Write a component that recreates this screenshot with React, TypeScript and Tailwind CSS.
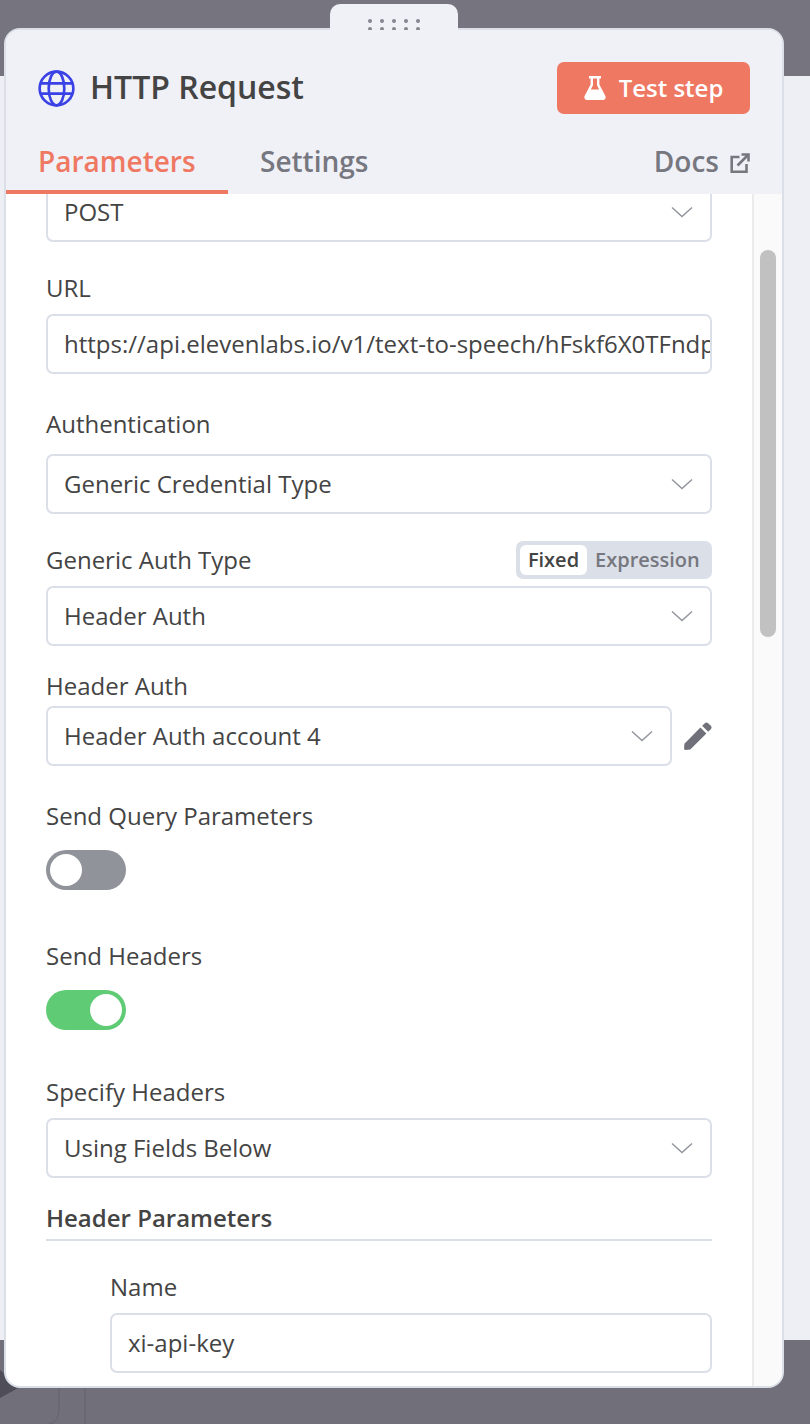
function Chevron() {
    return (
        <svg width="22" height="12" viewBox="0 0 22 12" fill="none" className="shrink-0">
            <path d="M1 1.5L11 10.5L21 1.5" stroke="#909399" strokeWidth="1.4" />
        </svg>
    );
}

function Select({ value, className = '' }: { value: string; className?: string }) {
    return (
        <div className={`flex h-[60px] items-center justify-between rounded-[7px] border-2 border-[#dbdfe7] bg-white pl-[16px] pr-[17px] ${className}`}>
            <span className="text-[24px] leading-none text-[#444444]">{value}</span>
            <Chevron />
        </div>
    );
}

function Label({ children, className = '' }: { children: React.ReactNode; className?: string }) {
    return <div className={`text-[24px] leading-[32px] text-[#444444] ${className}`}>{children}</div>;
}

function Toggle({ on }: { on?: boolean }) {
    return (
        <div className={`flex h-[40px] w-[80px] items-center rounded-full px-[4px] ${on ? 'justify-end bg-[#5fcb75]' : 'justify-start bg-[#909399]'}`}>
            <div className="h-[32px] w-[32px] rounded-full bg-white" />
        </div>
    );
}

function Globe() {
    return (
        <svg width="37" height="37" viewBox="0 0 36 36" fill="none" stroke="#3a42e5" strokeWidth="2.6">
            <circle cx="18" cy="18" r="16.4" />
            <ellipse cx="18" cy="18" rx="7.6" ry="16.4" />
            <path d="M2.5 13H33.5M2.5 23H33.5" />
        </svg>
    );
}

function Flask() {
    return (
        <svg width="22" height="24" viewBox="0 0 22 24" fill="white">
            <path d="M5 0H17V2.4H15.4V8.5L21.4 20C22.2 21.7 21 24 19 24H3C1 24 -0.2 21.7 0.6 20L6.6 8.5V2.4H5ZM9 2.4V9.2L6.8 13.5H15.2L13 9.2V2.4Z" fillRule="evenodd" />
        </svg>
    );
}

function Pencil() {
    return (
        <svg width="28" height="28" viewBox="0 0 29 29" fill="#6f7079" className="shrink-0">
            <path d="M0.4 22.5L17 5.8L23.2 12L6.5 28.6L1.5 28.9C0.6 28.9 0 28.2 0.1 27.4Z" />
            <path d="M18.8 4L21.6 1.2C22.6 0.2 24 0.2 25 1.2L27.8 4C28.8 5 28.8 6.4 27.8 7.4L25 10.2Z" />
        </svg>
    );
}

function DocsLink() {
    return (
        <svg width="20" height="20" viewBox="0 0 20 20" fill="none" stroke="#76777f" strokeWidth="2.6" className="mt-[7px]">
            <path d="M9.500 4H1.700V18.800H16.500V11" />
            <path d="M7.500 12.500L18 2" />
            <path d="M11.500 1.500H18.500V8.500" />
        </svg>
    );
}

export default function App() {
    return (
        <div
            className="relative flex h-[1424px] w-[810px] flex-col overflow-hidden bg-[#eeeff5]"
            style={{ fontFamily: '"Open Sans", sans-serif' }}
        >
            {/* Canvas behind the panel */}
            <div className="h-[76px] bg-[#76747f]" />
            <div className="flex-1" />
            <div className="relative h-[84px] bg-[#716f7a]">
                <svg width="90" height="84" viewBox="0 0 90 84" fill="none" className="absolute left-0 top-0">
                    <path d="M0 30L20 47L0 58Z" fill="#4f4d57" />
                    <path d="M59 46V70C59 78 55 83 49 84" stroke="#65636e" strokeWidth="1" />
                    <path d="M85 46V84" stroke="#65636e" strokeWidth="1" />
                </svg>
            </div>

            {/* Panel */}
            <div className="absolute left-[4px] top-[28px] flex h-[1360px] w-[780px] flex-col overflow-hidden rounded-[16px] border-2 border-[#dbdfe7] bg-white">
                {/* Header */}
                <div className="relative z-10 h-[164px] shrink-0 bg-[#f0f1f7]">
                    <div className="flex h-[116px] items-center justify-between pl-[32px] pr-[32px]">
                        <div className="flex items-center gap-[15px]">
                            <Globe />
                            <span className="mb-[2px] text-[32px] font-semibold leading-none text-[#444444]">HTTP Request</span>
                        </div>
                        <div className="flex h-[52px] w-[193px] items-center justify-center gap-[13px] rounded-[7px] bg-[#ef7863]">
                            <Flask />
                            <span className="text-[24px] font-semibold leading-none text-white">Test step</span>
                        </div>
                    </div>
                    <div className="flex h-[48px] items-start justify-between pr-[32px]">
                        <div className="flex">
                            <div className="h-[48px] w-[222px] border-b-[4px] border-[#ef7863] pl-[32px] text-[28px] font-semibold leading-[30px] text-[#ef7863]">
                                Parameters
                            </div>
                            <div className="pl-[32px] text-[28px] font-semibold leading-[30px] text-[#76777f]">Settings</div>
                        </div>
                        <div className="flex items-start gap-[11px] text-[28px] font-semibold leading-[30px] text-[#76777f]">
                            Docs
                            <DocsLink />
                        </div>
                    </div>
                </div>

                {/* Body */}
                <div className="flex min-h-0 flex-1">
                    <div className="w-[746px] shrink-0 overflow-hidden pl-[40px] pr-[40px]">
                        <div className="mt-[-12px]">
                            <Select value="POST" />
                            <Label className="mt-[30px]">URL</Label>
                            <div className="mt-[10px] flex h-[60px] items-center overflow-hidden whitespace-nowrap rounded-[7px] border-2 border-[#dbdfe7] pl-[16px] pr-[1px] text-[24px] leading-none text-[#444444]">
                                https://api.elevenlabs.io/v1/text-to-speech/hFskf6X0TFndp
                            </div>
                            <Label className="mt-[34px]">Authentication</Label>
                            <Select value="Generic Credential Type" className="mt-[14px]" />
                            <div className="mt-[27px] flex h-[38px] items-center justify-between">
                                <Label>Generic Auth Type</Label>
                                <div className="flex h-[38px] w-[196px] items-center rounded-[7px] bg-[#dbdfe7] pl-[4px]">
                                    <div className="flex h-[30px] w-[67px] items-center justify-center rounded-[6px] bg-white text-[20px] font-semibold leading-none text-[#444444]">
                                        Fixed
                                    </div>
                                    <div className="pl-[8px] text-[20px] font-semibold leading-none text-[#76777f]">Expression</div>
                                </div>
                            </div>
                            <Select value="Header Auth" className="mt-[7px]" />
                            <Label className="mt-[24px]">Header Auth</Label>
                            <div className="mt-[4px] flex items-center gap-[12px]">
                                <Select value="Header Auth account 4" className="w-[626px]" />
                                <Pencil />
                            </div>
                            <Label className="mt-[34px]">Send Query Parameters</Label>
                            <div className="mt-[18px]"><Toggle /></div>
                            <Label className="mt-[50px]">Send Headers</Label>
                            <div className="mt-[18px]"><Toggle on /></div>
                            <Label className="mt-[46px]">Specify Headers</Label>
                            <Select value="Using Fields Below" className="mt-[10px]" />
                            <div className="mt-[24px] h-[39px] border-b-2 border-[#dbdfe7] text-[24px] font-semibold leading-[32px] text-[#444444]">
                                Header Parameters
                            </div>
                            <div className="pl-[64px]">
                                <Label className="mt-[30px]">Name</Label>
                                <div className="mt-[10px] flex h-[60px] items-center rounded-[7px] border-2 border-[#dbdfe7] pl-[16px] text-[24px] leading-none text-[#444444]">
                                    xi-api-key
                                </div>
                            </div>
                        </div>
                    </div>

                    {/* Scrollbar */}
                    <div className="flex-1 border-l-2 border-[#ebebeb] bg-[#fafafa] pl-[6px] pt-[56px]">
                        <div className="h-[387px] w-[16px] rounded-full bg-[#c1c1c1]" />
                    </div>
                </div>
            </div>

            {/* Drag handle */}
            <div className="absolute left-[330px] top-[4px] flex h-[26px] w-[128px] items-start justify-center rounded-t-[10px] bg-[#f0f1f7] pt-[15px]">
                <div className="grid grid-cols-5 gap-x-[8px] gap-y-[4px]">
                    {Array.from({ length: 10 }).map((_, i) => (
                        <div key={i} className="h-[4px] w-[4px] rounded-full bg-[#85858f]" />
                    ))}
                </div>
            </div>
        </div>
    );
}
